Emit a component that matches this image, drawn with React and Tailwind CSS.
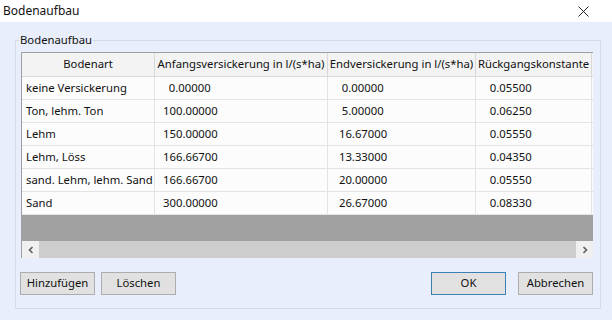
import React from "react";

const columns = [
  { title: "Bodenart", width: "w-[133px]" },
  { title: "Anfangsversickerung in l/(s*ha)", width: "w-[173px]" },
  { title: "Endversickerung in l/(s*ha)", width: "w-[148px]" },
  { title: "Rückgangskonstante", width: "w-[116px]" },
];

const rows = [
  ["keine Versickerung", "  0.00000", "  0.00000", "  0.05500"],
  ["Ton, lehm. Ton", "100.00000", "  5.00000", "  0.06250"],
  ["Lehm", "150.00000", " 16.67000", "  0.05550"],
  ["Lehm, Löss", "166.66700", " 13.33000", "  0.04350"],
  ["sand. Lehm, lehm. Sand", "166.66700", " 20.00000", "  0.05550"],
  ["Sand", "300.00000", " 26.67000", "  0.08330"],
];

const Button = ({ children, primary }) => (
  <button
    className={`h-[23px] w-[75px] bg-[#e1e1e1] text-[11.3px] text-[#111] border ${
      primary ? "border-[#3c7fb1]" : "border-[#adadad]"
    }`}
  >
    {children}
  </button>
);

export default function App() {
  return (
    <div
      className="w-[612px] h-[320px] bg-[#e8eefc] flex flex-col overflow-hidden text-[#111]"
      style={{ fontFamily: '"Noto Sans", "Open Sans", sans-serif' }}
    >
      {/* Titelleiste */}
      <div className="h-[22px] bg-white flex items-center justify-between pl-[3px] pr-[23px] shrink-0">
        <span className="text-[12px]">Bodenaufbau</span>
        <svg width="11" height="11" viewBox="0 0 11 11">
          <path d="M0.5 0.5 L10.5 10.5 M10.5 0.5 L0.5 10.5" stroke="#222" strokeWidth="1" />
        </svg>
      </div>

      <div className="pl-[15px] pr-[11px] pt-[18px]">
        <div className="relative h-[269px] border border-[#d5dae6] pl-[5px] pr-[7px] pt-[11px]">
          <span className="absolute -top-[9px] left-[3px] bg-[#e8eefc] px-[1px] text-[11.3px] leading-[16px]">
            Bodenaufbau
          </span>

          {/* Tabelle */}
          <div className="h-[206px] border-l border-t border-[#a0a0a0] flex flex-col overflow-hidden">
            <div className="flex-1 bg-[#a0a0a0] overflow-hidden">
              <div className="flex h-[24px] bg-[#f3f3f3] border-b border-[#d8d8d8]">
                {columns.map((c) => (
                  <div
                    key={c.title}
                    className={`${c.width} shrink-0 border-r border-[#d8d8d8] flex items-center justify-center text-[11.3px] whitespace-nowrap`}
                  >
                    {c.title}
                  </div>
                ))}
              </div>
              {rows.map((r, i) => (
                <div key={i} className="flex h-[23px] bg-[#fcfcfc] border-b border-[#e3e3e3]">
                  {r.map((v, j) => (
                    <div
                      key={j}
                      className={`${columns[j].width} shrink-0 border-r border-[#e3e3e3] flex items-center text-[11.3px] whitespace-pre ${
                        j === 0 ? "pl-[4px]" : "pl-[8px]"
                      }`}
                    >
                      {v}
                    </div>
                  ))}
                </div>
              ))}
            </div>
            {/* Scrollbar */}
            <div className="h-[17px] flex shrink-0 bg-[#cdcdcd]">
              <div className="w-[17px] bg-[#f0f0f0] flex items-center justify-center">
                <svg width="8" height="8" viewBox="0 0 8 8">
                  <path d="M5.5 1 L2.5 4 L5.5 7" fill="none" stroke="#606060" strokeWidth="1.6" />
                </svg>
              </div>
              <div className="flex-1 bg-[#cdcdcd]" />
              <div className="w-[17px] bg-[#f0f0f0] flex items-center justify-center">
                <svg width="8" height="8" viewBox="0 0 8 8">
                  <path d="M2.5 1 L5.5 4 L2.5 7" fill="none" stroke="#606060" strokeWidth="1.6" />
                </svg>
              </div>
            </div>
          </div>

          {/* Buttons */}
          <div className="flex items-center justify-between mt-[14px] -ml-[1px]">
            <div className="flex gap-[6px]">
              <Button>Hinzufügen</Button>
              <Button>Löschen</Button>
            </div>
            <div className="flex gap-[12px]">
              <Button primary>OK</Button>
              <Button>Abbrechen</Button>
            </div>
          </div>
        </div>
      </div>
    </div>
  );
}
